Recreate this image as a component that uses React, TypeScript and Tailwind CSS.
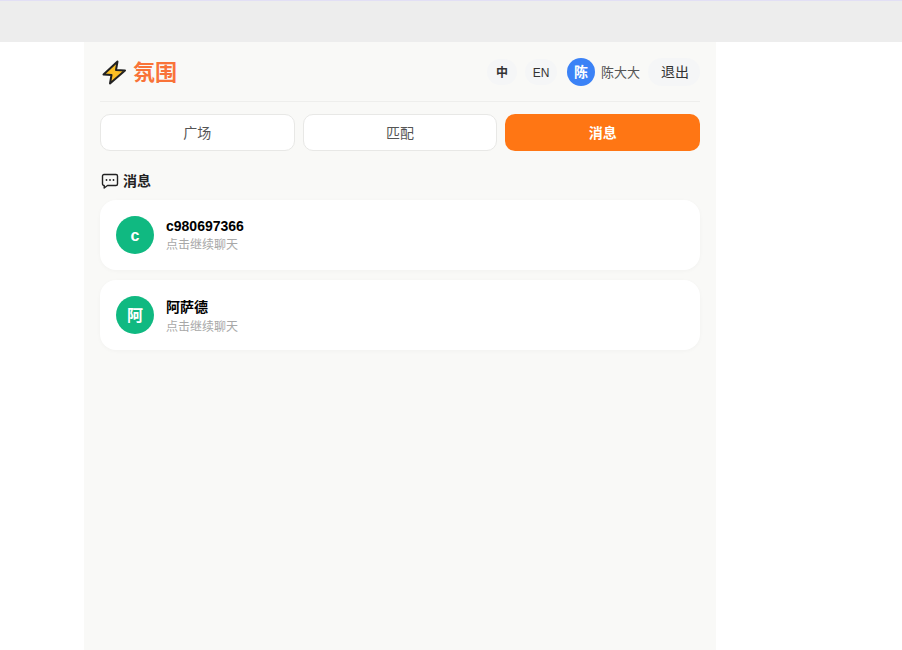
const rows = [
  { a: "c", n: "c980697366", top: "pt-[2px]", gap: "mb-[1px]" },
  { a: "阿", n: "阿萨德", top: "pt-[5px]", gap: "mb-[2px]" },
];

export default function App() {
  const f = { fontFamily: '"Liberation Sans", "Noto Sans CJK SC", sans-serif' };
  return (
    <div style={f} className="min-h-[650px] bg-white flex flex-col">
      <div className="h-[42px] shrink-0 bg-[#ededed] border-t border-[#e2dff5]" />
      <div className="w-[632px] ml-[84px] flex-1 bg-[#f9f9f7] px-4">
        <header className="h-[60px] border-b border-[#eeeeec] flex items-center justify-between">
          <div className="flex items-center gap-[4px]">
            <svg width="29" height="29" viewBox="0 0 29 29" fill="none" className="mt-[2px]">
              <path d="M17.5 3.5 L3.5 16.5 L11.5 17 L10 25.5 L25 12.5 L16 12 Z" fill="#fbbf24" stroke="#222222" strokeWidth="2" strokeLinejoin="round" />
            </svg>
            <span className="text-[22px] leading-none font-bold text-[#f97338] pt-[3px]">氛围</span>
          </div>
          <div className="flex items-center">
            <span className="w-[30px] h-[26px] pt-[2px] rounded-full bg-[#f5f6f7] flex items-center justify-center text-[12px] font-bold text-[#333333]">中</span>
            <span className="ml-[8px] w-[32px] h-[26px] pt-[2px] rounded-full bg-[#f5f6f7] flex items-center justify-center text-[12px] text-[#333333]">EN</span>
            <span className="ml-[10px] w-7 h-7 pt-px rounded-full bg-[#3b82f6] flex items-center justify-center text-[14px] font-bold text-white">陈</span>
            <span className="ml-[6px] text-[13px] pt-[2px] text-[#555555]">陈大大</span>
            <span className="ml-2 w-[52px] h-7 pl-[2px] pt-[2px] rounded-full bg-[#f5f6f7] flex items-center justify-center text-[14px] text-[#333333]">退出</span>
          </div>
        </header>
        <nav className="mt-3 grid grid-cols-3 gap-2 h-[37px]">
          <div className="rounded-[10px] pt-[2px] bg-white border border-[#e8e8e6] flex items-center justify-center text-[14px] text-[#555555]">广场</div>
          <div className="rounded-[10px] pt-[2px] bg-white border border-[#e8e8e6] flex items-center justify-center text-[14px] text-[#555555]">匹配</div>
          <div className="rounded-[10px] pt-[2px] bg-[#ff7614] flex items-center justify-center text-[14px] font-bold text-white">消息</div>
        </nav>
        <div className="mt-[20px] h-5 flex items-center gap-[4px] text-[#222222]">
          <svg width="18" height="18" viewBox="0 0 18 18" fill="none" className="ml-[1px]">
            <path d="M3 2.5 H15 A1.5 1.5 0 0 1 16.5 4 V12 A1.5 1.5 0 0 1 15 13.5 H6.5 L3.2 16 V13.5 H3 A1.5 1.5 0 0 1 1.5 12 V4 A1.5 1.5 0 0 1 3 2.5 Z" stroke="#222222" strokeWidth="1.4" strokeLinejoin="round" />
            <circle cx="5.5" cy="8" r="0.9" fill="#222222" />
            <circle cx="9" cy="8" r="0.9" fill="#222222" />
            <circle cx="12.5" cy="8" r="0.9" fill="#222222" />
          </svg>
          <span className="text-[14px] font-bold">消息</span>
        </div>
        <div className="mt-[9px] flex flex-col gap-[10px]">
          {rows.map((r) => (
            <div key={r.n} className="h-[70px] rounded-[16px] bg-white shadow-[0_1px_4px_rgba(0,0,0,0.03)] flex items-center px-4 gap-3">
              <div className="w-[38px] h-[38px] pt-px rounded-full bg-[#10b981] flex items-center justify-center text-[16px] font-bold text-white">{r.a}</div>
              <div className={`flex flex-col ${r.top}`}>
                <span className={`text-[14px] leading-[18px] font-bold text-black ${r.gap}`}>{r.n}</span>
                <span className="text-[12px] leading-[19px] text-[#a8a8a8]">点击继续聊天</span>
              </div>
            </div>
          ))}
        </div>
      </div>
    </div>
  );
}
